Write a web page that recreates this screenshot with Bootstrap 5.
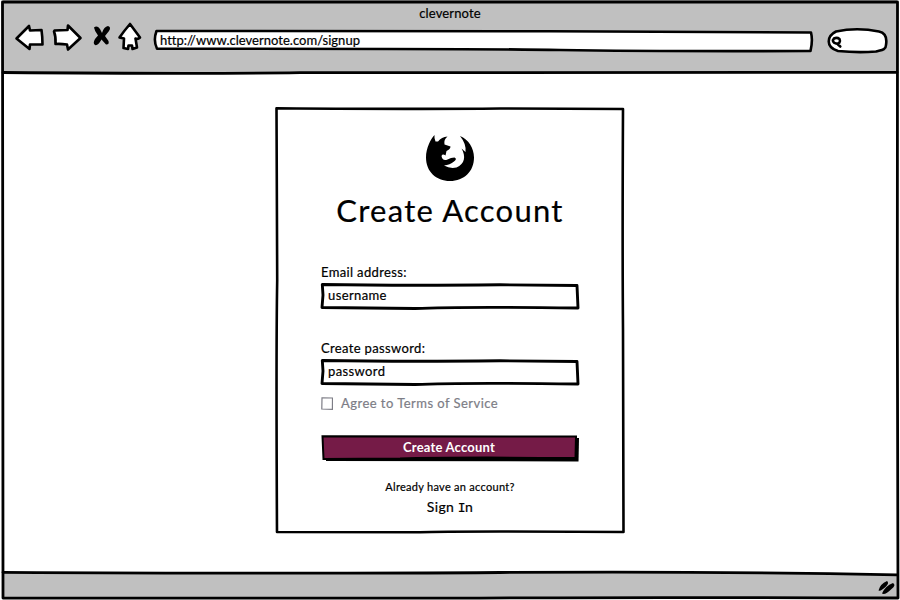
<!DOCTYPE html>
<html lang="en">
<head>
<meta charset="utf-8">
<meta name="viewport" content="width=device-width, initial-scale=1">
<title>clevernote</title>
<link href="https://cdn.jsdelivr.net/npm/bootstrap@5.3.0/dist/css/bootstrap.min.css" rel="stylesheet">
<style>
body { font-family: Lato, "Open Sans", sans-serif; color: #000; font-size: 13px; -webkit-text-stroke: .2px currentColor; }
.browser { width: 900px; height: 600px; background: #fff; }
.chrome-top { height: 73px; background: #c0c0c0; margin: 0 3px; }
.chrome-bottom { height: 27px; background: #c0c0c0; margin: 0 3px 2px 4px; }
.window-title { height: 20px; line-height: 20px; padding-top: 3px; letter-spacing: .15px; }
.toolbar { height: 44px; margin-left: 11px; }
.toolbar svg { display: block; flex: none; }
.icon-home { margin-left: 5px; }
.icon-search { margin-left: 12px; }
.ink { fill: none; stroke: #000; stroke-width: 2.6; stroke-linejoin: round; stroke-linecap: round; }
.paper { fill: #fff; }
.sketch { position: absolute; inset: 0; width: 100%; height: 100%; overflow: visible; pointer-events: none; }
.address { width: 662px; margin-left: 9px; }
.address span { padding-left: 8px; line-height: 40px; letter-spacing: .02px; }
.signup { width: 350px; height: 426px; margin-top: 34px; padding: 27px 46px 0; }
.signup h1 { font-size: 31px; line-height: 40px; margin: 8px -20px 32px; font-weight: 400; letter-spacing: 1.25px; }
.field-label { display: block; height: 21px; line-height: 20px; letter-spacing: .35px; }
.field-gap { margin-top: 28px; }
.field { height: 27px; line-height: 24px; padding-left: 7px; letter-spacing: .38px; }
.field .ink { stroke-width: 2.9; }
.terms { height: 20px; line-height: 20px; color: #7d7d86; letter-spacing: .46px; margin-top: 7px; }
.create { height: 27px; line-height: 25px; margin-top: 22px; color: #fff; font-weight: 700; letter-spacing: .2px; -webkit-text-stroke: 0; }
.create span { left: -1px; }
.already { font-size: 11px; line-height: 18px; margin-top: 16px; letter-spacing: .28px; }
.signin { font-size: 14px; line-height: 20px; margin-top: 1px; letter-spacing: .35px; }
.slab { font-family: "DejaVu Sans Mono", monospace; font-size: 13px; letter-spacing: 0; margin: 0 -.5px; }
</style>
</head>
<body>
<div class="browser position-relative overflow-hidden d-flex flex-column">
  <header class="chrome-top">
    <div class="window-title text-center">clevernote</div>
    <div class="toolbar d-flex">
      <svg width="32" height="44" viewBox="14 19 32 44"><path class="ink paper" d="M16.500 37.500 L29 25 30 29.500 41.500 29 Q42.500 36 42.500 43.500 L30 43.500 29.500 48 Q22 42 16.500 37.500Z"/></svg>
      <svg class="ms-1" width="34" height="44" viewBox="50 19.500 34 44"><path class="ink paper" d="M54.500 30 Q60 29.500 67.500 29.500 L68 25 80.500 37.500 68 49 67 44 Q60 43 55.500 43.500 56 36 54 31Z"/></svg>
      <svg class="ms-2" width="20" height="44" viewBox="92 20 20 44"><path d="M94 27.500 Q97 25 100 29 L102 33 Q104 26.500 108 26 111.500 27 109 31 L105 36 108.500 41 Q109.500 44.800 106 44.500 L101.500 39.500 Q98 46 95 45 92.500 43.500 95 39 L98 35.500 Q94.500 31 94 27.500Z"/></svg>
      <svg class="icon-home" width="26" height="44" viewBox="117 20 26 44"><path class="ink paper" d="M130 24 L140 37.500 Q138 39.500 135.500 38.500 L137 47.500 132.500 49 132 45.500 128.500 45.500 128 49 123.500 48 124 38.500 119.500 37.500 Q124 31 130 24Z"/></svg>
      <div class="address position-relative">
        <svg class="sketch" viewBox="152 20.500 662 44"><path class="ink paper" d="M156.500 31.500 Q400 31 550 31.700 T811 33 Q813 41 810.500 51.500 Q650 52 560 50.500 T157 49.300 Q153 41 156.500 31.500Z"/></svg>
        <span class="position-relative">http://www.clevernote.com/signup</span>
      </div>
      <svg class="icon-search" width="63" height="44" viewBox="826 20 63 44"><path class="ink paper" d="M836 31.500 Q857 27 879 31.500 C886 33 887 39 886 45 C886 50 881 50 876 51.500 Q858 53 838 51 C825 47 827 36 836 31.500Z"/><path class="ink" d="M834 38.500 Q837 37 839.500 39 C841 42 839 44 836 43.500 C833 43 832 40.500 834 38.500ZM838 44.500 L840.300 46.500"/></svg>
    </div>
  </header>

  <main class="flex-grow-1">
    <section class="signup position-relative mx-auto text-center">
      <svg class="sketch" viewBox="275 107 350 426"><path class="ink" d="M276.500 108.200 Q420 109.300 500 108.500 L623 109 Q622.300 240 623 330 L623.500 532 Q450 531 420 532.300 L277 532 Q276 350 277.200 280 Z"/></svg>
      <svg class="d-block mx-auto" width="48" height="48" viewBox="426 134 48 48" aria-label="fox"><path d="M434.500 135 Q434 138 435.500 141.500 L438 141.500 Q441.500 137 447.500 136.500 Q443.500 139.500 444.500 144.500 L450.500 146.500 Q450.500 149 446.500 151 L445.500 155.500 Q442.500 153.500 441.500 156 Q442.500 161.500 447.500 159.500 Q451 157.500 454.500 157.500 Q457.500 159 454 161.500 Q450 165 444 165.500 Q450 169 456.500 167.500 C465 164 466 156 461.500 148.500 L465.500 152 Q466.500 144 460 136 C468.500 139.500 474 148 474 157.500 C474 171.500 464 181 450 181 C436 181 426 171.500 426 157.500 C426 148.500 430.500 139 434.500 135Z"/></svg>
      <h1>Create Account</h1>
      <form class="text-start">
        <label class="field-label">Email address:</label>
        <div class="field position-relative">
          <svg class="sketch" viewBox="321 283 258 27"><path class="ink" d="M322.300 284.500 Q400 285.800 500 284.800 L577 285.500 578 308 Q460 306.500 415 308.500 L322 307.500 323 295Z"/></svg>
          <span>username</span>
        </div>
        <label class="field-label field-gap">Create password:</label>
        <div class="field position-relative">
          <svg class="sketch" viewBox="321 283 258 27"><path class="ink" d="M322.300 284.500 Q400 285.800 500 284.800 L577 285.500 578 308 Q460 306.500 415 308.500 L322 307.500 323 295Z"/></svg>
          <span>password</span>
        </div>
        <div class="terms d-flex align-items-center">
          <svg class="me-2" width="12" height="13" viewBox="0 0 12 13"><path d="M1 .8 L11.500 1 11.400 12.300 .8 12Z" fill="none" stroke="#7d7d86" stroke-width="1.200"/></svg>
          <span>Agree to Terms of Service</span>
        </div>
        <div class="create position-relative text-center" role="button">
          <svg class="sketch" viewBox="321 435 258 27"><path d="M326 438 L579 438 578.500 461.500 326 461Z"/><path class="ink" style="fill:#751b47;stroke-width:2;stroke-linejoin:miter" d="M322.500 436.300 L576 436.500 575.500 458 Q450 457 400 458.500 L323.500 459Z"/></svg>
          <span class="position-relative">Create Account</span>
        </div>
      </form>
      <div class="already">Already have an account?</div>
      <div class="signin">Sign <span class="slab">I</span>n</div>
    </section>
  </main>

  <footer class="chrome-bottom d-flex justify-content-end">
    <svg width="22" height="27" viewBox="875 571 22 27"><path d="M878.500 590.500 Q880 584 887 581 Q889.500 583 886 586.500 Q881 591.500 878.500 590.500ZM882 593.500 Q885 586 893 583 Q896.500 585 891.500 589 Q885 595.500 882 593.500Z"/></svg>
  </footer>
  <svg class="sketch" viewBox="0 0 900 600">
    <path fill="#fff" d="M4 565H897V575.500L700 572.500 4 572Z"/>
    <path class="ink" style="stroke-width:2.8" d="M2.500 2 H897.500 L897.300 300 898 598 Q600 597 480 598.200 L3 598 2.800 300 2.500 2"/>
    <path class="ink" style="stroke-width:2.8" d="M3 72.500 Q200 74 300 72.700 L897 72.300M3 572.300 Q300 574 500 572.500 T897 574.800"/>
  </svg>
</div>
<script src="https://cdn.jsdelivr.net/npm/bootstrap@5.3.0/dist/js/bootstrap.bundle.min.js"></script>
</body>
</html>
